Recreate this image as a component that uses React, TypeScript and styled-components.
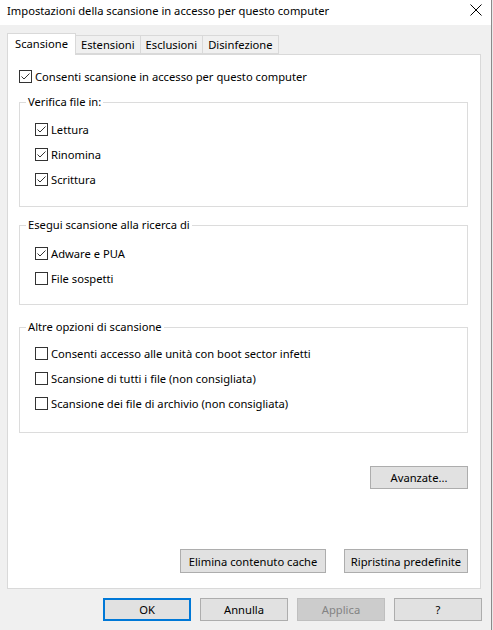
import React from "react";
import styled, { createGlobalStyle } from "styled-components";

const GlobalStyle = createGlobalStyle`
  html, body {
    margin: 0;
    padding: 0;
  }
  body {
    background: #ffffff;
    font-family: "Noto Sans", "Open Sans", sans-serif;
    font-size: 11.2px;
    color: #000;
  }
`;

const Screen = styled.div`
  display: flex;
  width: 493px;
  height: 630px;
`;

const Dialog = styled.div`
  width: 491px;
  height: 630px;
  display: flex;
  flex-direction: column;
  background: #f0f0f0;
  border-right: 1px solid #8a8a8a;
`;

const Edge = styled.div`
  flex: 1;
  background: #e8e8e8;
`;

const TitleBar = styled.div`
  height: 25px;
  box-sizing: border-box;
  padding: 0 9px 5px 7px;
  display: flex;
  align-items: center;
  justify-content: space-between;
  background: #fff;
`;

const Title = styled.span`
  font-size: 11.2px;
  color: #000;
`;

const Body = styled.div`
  flex: 1;
  display: flex;
  flex-direction: column;
  padding: 8px 10px 0 7px;
`;

const TabStrip = styled.div`
  display: flex;
  align-items: flex-end;
  height: 21px;
  position: relative;
  z-index: 1;
`;

const Tab = styled.div<{ $active?: boolean }>`
  box-sizing: border-box;
  height: ${(p) => (p.$active ? "22px" : "19px")};
  margin-bottom: ${(p) => (p.$active ? "-1px" : "0")};
  margin-left: ${(p) => (p.$active ? "0" : "-1px")};
  padding: ${(p) => (p.$active ? "0 7px 2px 7px" : "0 5px")};
  display: flex;
  align-items: center;
  background: ${(p) => (p.$active ? "#fff" : "#f0f0f0")};
  border: 1px solid #d9d9d9;
  border-bottom: ${(p) => (p.$active ? "none" : "1px solid #d9d9d9")};
  &:first-child {
    margin-left: 0;
  }
`;

const Panel = styled.div`
  box-sizing: border-box;
  height: 535px;
  display: flex;
  flex-direction: column;
  background: #fff;
  border: 1px solid #d9d9d9;
  padding: 9px 12px 15px 11px;
`;

const Row = styled.label`
  display: flex;
  align-items: center;
  gap: 3px;
  height: 25px;
`;

const Box = styled.span`
  box-sizing: border-box;
  width: 13px;
  height: 13px;
  border: 1px solid #333;
  background: #fff;
  display: flex;
`;

const Group = styled.fieldset<{ $gap: number }>`
  margin: ${(p) => p.$gap}px 0 0 0;
  padding: 0;
  border: 1px solid #dcdcdc;
  min-width: 0;
`;

const Legend = styled.legend`
  margin-left: 6px;
  padding: 0 2px;
  line-height: 16px;
`;

const GroupBody = styled.div<{ $top: number; $bottom: number }>`
  padding: ${(p) => p.$top}px 0 ${(p) => p.$bottom}px 15px;
`;

const Button = styled.button<{ $w: number; $h?: number; $default?: boolean }>`
  box-sizing: border-box;
  width: ${(p) => p.$w}px;
  height: ${(p) => p.$h ?? 23}px;
  padding: 0;
  font-family: inherit;
  font-size: 11.2px;
  color: #000;
  background: #e1e1e1;
  border: ${(p) => (p.$default ? "2px solid #0078d7" : "1px solid #adadad")};
  &:disabled {
    background: #cccccc;
    border-color: #bfbfbf;
    color: #838383;
  }
`;

const RightAligned = styled.div`
  display: flex;
  justify-content: flex-end;
  margin-top: 33px;
`;

const PanelFooter = styled.div`
  display: flex;
  justify-content: flex-end;
  gap: 18px;
  margin-top: auto;
`;

const DialogFooter = styled.div`
  display: flex;
  justify-content: flex-end;
  gap: 9px;
  margin: 9px -1px 0 0;
`;

const Check: React.FC<{ checked?: boolean; label: string }> = ({ checked, label }) => (
  <Row>
    <Box>
      {checked && (
        <svg width="11" height="11" viewBox="0 0 11 11">
          <path d="M1.5 5.5 L4 8 L9.5 2.5" fill="none" stroke="#333" strokeWidth="1" />
        </svg>
      )}
    </Box>
    <span>{label}</span>
  </Row>
);

export default function App() {
  return (
    <>
      <GlobalStyle />
      <Screen>
        <Dialog>
          <TitleBar>
            <Title>Impostazioni della scansione in accesso per questo computer</Title>
            <svg width="12" height="12" viewBox="0 0 12 12">
              <path d="M0.5 0.5 L11.5 11.5 M11.5 0.5 L0.5 11.5" stroke="#000" strokeWidth="1" />
            </svg>
          </TitleBar>
          <Body>
            <TabStrip>
              <Tab $active>Scansione</Tab>
              <Tab>Estensioni</Tab>
              <Tab>Esclusioni</Tab>
              <Tab>Disinfezione</Tab>
            </TabStrip>
            <Panel>
              <Check checked label="Consenti scansione in accesso per questo computer" />
              <Group $gap={5}>
                <Legend>Verifica file in:</Legend>
                <GroupBody $top={7} $bottom={14}>
                  <Check checked label="Lettura" />
                  <Check checked label="Rinomina" />
                  <Check checked label="Scrittura" />
                </GroupBody>
              </Group>
              <Group $gap={10}>
                <Legend>Esegui scansione alla ricerca di</Legend>
                <GroupBody $top={8} $bottom={13}>
                  <Check checked label="Adware e PUA" />
                  <Check label="File sospetti" />
                </GroupBody>
              </Group>
              <Group $gap={14}>
                <Legend>Altre opzioni di scansione</Legend>
                <GroupBody $top={6} $bottom={16}>
                  <Check label="Consenti accesso alle unità con boot sector infetti" />
                  <Check label="Scansione di tutti i file (non consigliata)" />
                  <Check label="Scansione dei file di archivio (non consigliata)" />
                </GroupBody>
              </Group>
              <RightAligned>
                <Button $w={98}>Avanzate...</Button>
              </RightAligned>
              <PanelFooter>
                <Button $w={146} $h={24}>Elimina contenuto cache</Button>
                <Button $w={124} $h={24}>Ripristina predefinite</Button>
              </PanelFooter>
            </Panel>
            <DialogFooter>
              <Button $w={88} $default>OK</Button>
              <Button $w={88}>Annulla</Button>
              <Button $w={88} disabled>Applica</Button>
              <Button $w={88}>?</Button>
            </DialogFooter>
          </Body>
        </Dialog>
        <Edge />
      </Screen>
    </>
  );
}
